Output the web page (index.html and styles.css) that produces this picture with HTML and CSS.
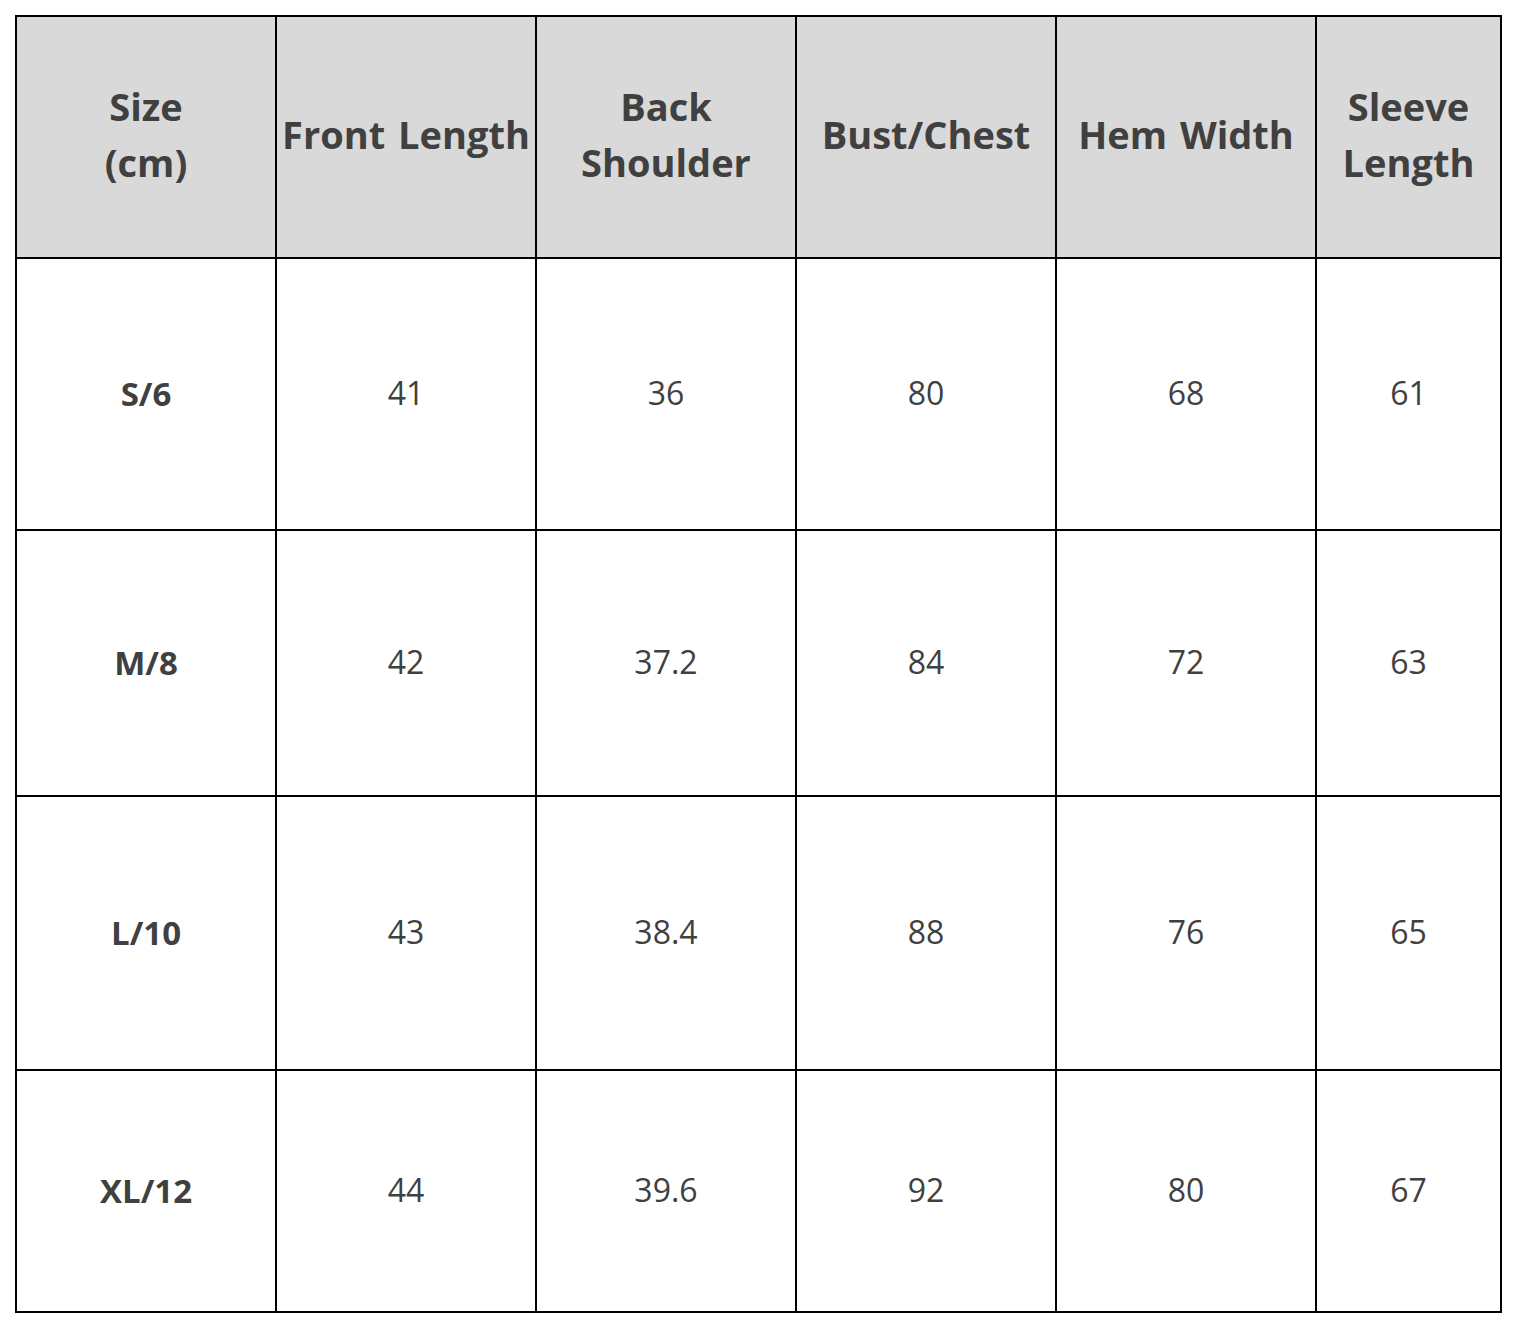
FILE: index.html
```html
<!DOCTYPE html>
<html lang="en">
<head>
<meta charset="utf-8">
<title>Size Chart</title>
<link rel="stylesheet" href="styles.css">
</head>
<body>
<div class="chart" role="table">
  <div class="cell head" role="columnheader">Size<br>(cm)</div>
  <div class="cell head" role="columnheader">Front Length</div>
  <div class="cell head" role="columnheader">Back<br>Shoulder</div>
  <div class="cell head" role="columnheader">Bust/Chest</div>
  <div class="cell head" role="columnheader">Hem Width</div>
  <div class="cell head" role="columnheader">Sleeve<br>Length</div>

  <div class="cell size" role="rowheader">S/6</div>
  <div class="cell">41</div>
  <div class="cell">36</div>
  <div class="cell">80</div>
  <div class="cell">68</div>
  <div class="cell">61</div>

  <div class="cell size" role="rowheader">M/8</div>
  <div class="cell">42</div>
  <div class="cell">37.2</div>
  <div class="cell">84</div>
  <div class="cell">72</div>
  <div class="cell">63</div>

  <div class="cell size" role="rowheader">L/10</div>
  <div class="cell">43</div>
  <div class="cell">38.4</div>
  <div class="cell">88</div>
  <div class="cell">76</div>
  <div class="cell">65</div>

  <div class="cell size" role="rowheader">XL/12</div>
  <div class="cell">44</div>
  <div class="cell">39.6</div>
  <div class="cell">92</div>
  <div class="cell">80</div>
  <div class="cell">67</div>
</div>
</body>
</html>
```

FILE: styles.css
```css
html, body {
  margin: 0;
  background: #ffffff;
}

body {
  padding: 15px;
  font-family: "Open Sans", "Noto Sans", sans-serif;
  color: #404040;
}

.chart {
  display: grid;
  grid-template-columns: 258px 258px 258px 258px 258px 183px;
  grid-template-rows: 240px 270px 264px 272px 240px;
  gap: 2px;
  padding: 2px;
  background: #000000;
  width: max-content;
}

.cell {
  background: #ffffff;
  display: flex;
  align-items: center;
  justify-content: center;
  text-align: center;
  font-size: 32px;
  line-height: 1;
  padding-bottom: 2px;
}

.head {
  background: #d9d9d9;
  font-weight: 700;
  font-size: 38px;
  line-height: 56px;
  padding-bottom: 6px;
  word-spacing: 3px;
}

.size {
  font-weight: 700;
  font-size: 33px;
}
```
